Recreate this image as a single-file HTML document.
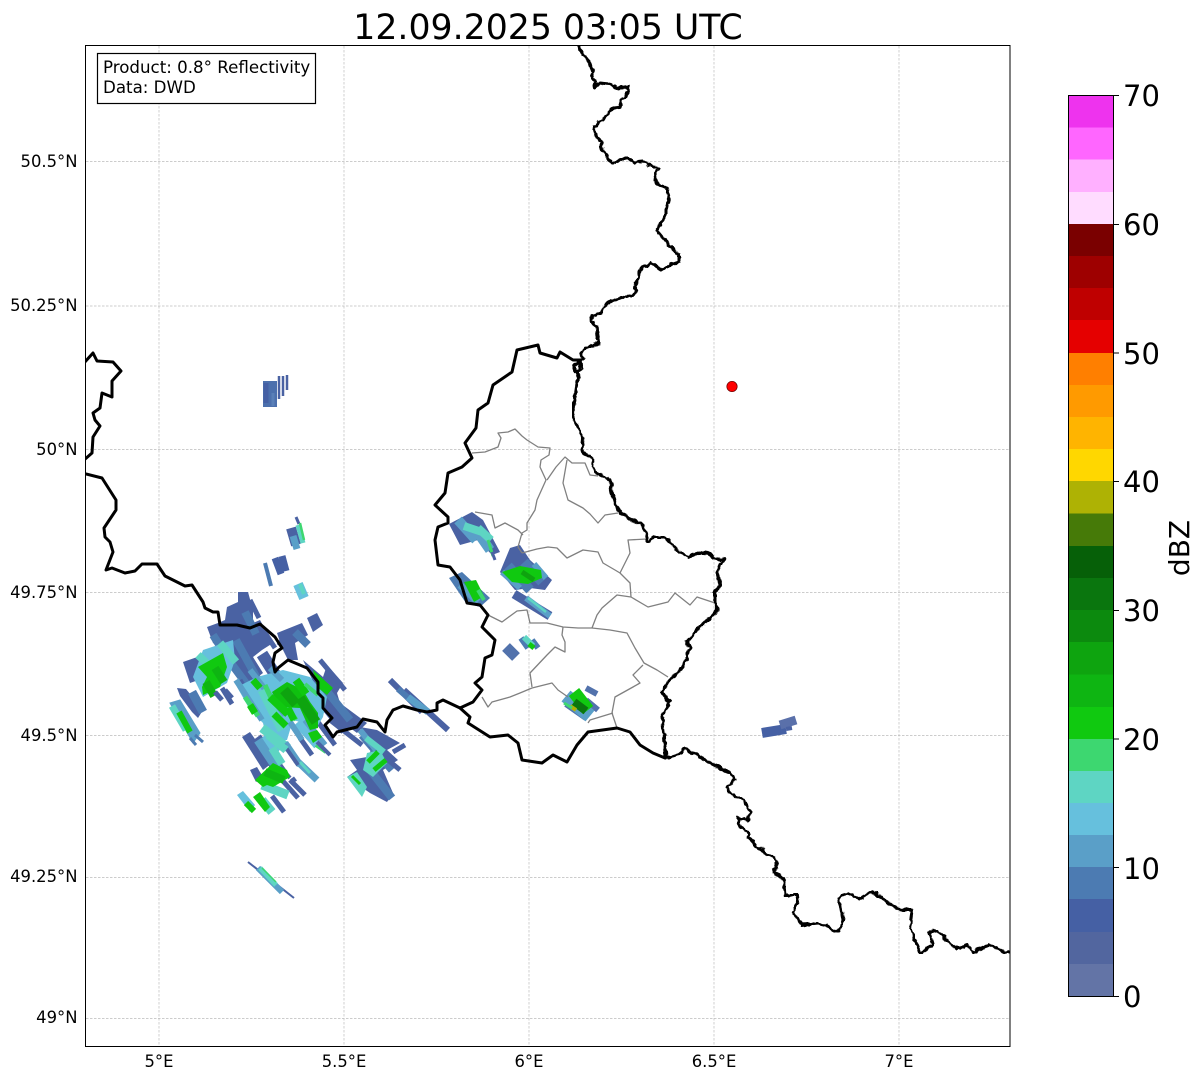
<!DOCTYPE html>
<html><head><meta charset="utf-8"><title>Radar</title>
<style>
html,body{margin:0;padding:0;background:#fff}
svg{display:block}
text{font-family:"DejaVu Sans","Liberation Sans",sans-serif;fill:#000}
</style></head><body>
<svg width="1202" height="1081" viewBox="0 0 1202 1081" xmlns="http://www.w3.org/2000/svg">
<defs>
<clipPath id="ax"><rect x="86" y="46" width="924" height="1000"/></clipPath>
<filter id="wig" x="0" y="0" width="1" height="1" filterUnits="objectBoundingBox" color-interpolation-filters="sRGB">
<feTurbulence type="fractalNoise" baseFrequency="0.16" numOctaves="2" seed="4"/>
<feDisplacementMap in="SourceGraphic" scale="5" xChannelSelector="R" yChannelSelector="G"/>
</filter>
</defs>
<rect width="1202" height="1081" fill="#fff"/>
<text x="548" y="39" font-size="34.7" text-anchor="middle">12.09.2025 03:05 UTC</text>

<g clip-path="url(#ax)">
<!-- grid -->
<path d="M159 46V1046M344 46V1046M529 46V1046M714 46V1046M899 46V1046M86 161.500H1010M86 306H1010M86 449.500H1010M86 592.500H1010M86 735.500H1010M86 877.500H1010M86 1018.500H1010" fill="none" stroke="#bcbcbc" stroke-width=".7" stroke-dasharray="2.500 1.500"/>

<!-- radar -->
<g fill="none">
<!-- north block -->
<path stroke="#4c70ad" stroke-width="14" d="M270 381V407"/>
<path stroke="#4a62a3" stroke-width="2.500" d="M279 376V399M283 376V396M287 375V390"/>
<path stroke="#4560a4" stroke-width="5" d="M266 383V403"/>
<path stroke="#5a80b8" stroke-width="3" d="M273 393V406"/>
<!-- small ones -->
<path stroke="#4a62a3" stroke-width="3" d="M296 517L299 524"/>
<path stroke="#4a62a3" stroke-width="10" d="M291 528L296 545"/>
<path stroke="#5a9fc8" stroke-width="7" d="M293 536L297 549"/>
<path stroke="#5ed5c3" stroke-width="5" d="M298 525L303 543"/>
<path stroke="#3dd770" stroke-width="2.500" d="M300 523L304 540"/>
<path stroke="#4560a4" stroke-width="7" d="M275 558L281 574M282 556L286 571"/>
<path stroke="#4c7bb2" stroke-width="4" d="M265 563L271 586"/>
<path stroke="#66c0dd" stroke-width="10" d="M298 584L304 598"/>
<path stroke="#5ed5c3" stroke-width="4" d="M300 584L304 594"/>
<!-- main polygons -->
<g fill="#4a62a3">
<path d="M238 592L248 592L253 610L253 623L260 620L273 643L262 650L253 657L263 673L250 683L237 673L233 657L213 643L207 627L218 623L225 620L227 607L238 602Z"/>
<path d="M277 633L302 623L308 635L295 643L298 660L288 660L282 648Z"/>
<path d="M307 618L317 613L323 625L313 632Z"/>
<path d="M303 660L323 677L327 665L343 683L337 693L340 703L367 723L357 733L330 713L317 690Z"/>
<path d="M360 727L377 730L400 743L387 750L398 760L383 770L393 793L387 802L370 793L347 777L357 770L350 760L367 757L373 747Z"/>
<path d="M183 662L203 655L207 677L190 683Z"/>
<path d="M242 737L250 732L272 763L263 770Z"/>
<path d="M250 770L257 767L263 777L256 782Z"/>
<path d="M177 688L186 689L203 710L198 718L192 712L180 696Z"/>
</g>
<path stroke="#4a62a3" stroke-width="12" d="M256 738L282 774M322 700L346 730M236 660L258 695M262 654L276 676"/>
<path stroke="#4c7bb2" stroke-width="8" d="M213 635L232 665M236 640L258 680M225 655L262 705M295 632L308 645M322 685L350 720M245 612L256 634M362 735L392 770M370 770L392 798"/>
<path stroke="#4a62a3" stroke-width="5" d="M250 600L259 618M262 628L275 648M320 660L345 690M240 680L252 700M278 642L290 650M393 752L405 745M330 720L362 745M290 780L305 795M370 745L400 770M318 722L335 745M300 738L312 755M195 675L205 690M222 688L232 704"/>
<!-- streak east of cluster -->
<path stroke="#4a62a3" stroke-width="6" d="M390 680L422 712M404 690L448 730"/>
<path stroke="#4c7bb2" stroke-width="6" d="M398 689L420 708"/>
<path stroke="#5a9fc8" stroke-width="7" d="M408 697L428 712"/>
<!-- far left -->
<path stroke="#4c7bb2" stroke-width="9" d="M192 692L203 712"/>
<path stroke="#5a9fc8" d="M170 703L180 700L200 733L193 743Z" fill="#5a9fc8" stroke-width="1"/>
<path stroke="#5ed5c3" stroke-width="7" d="M172 706L186 730"/>
<path stroke="#10c910" stroke-width="6" d="M179 712L190 732"/>
<path stroke="#4c7bb2" stroke-width="3" d="M195 735L203 742M190 738L196 745"/>
<!-- left sub cluster -->
<path d="M203 650L233 640L235 660L227 683L203 697L193 677Z" fill="#66c0dd"/>
<path stroke="#5ed5c3" stroke-width="8" d="M198 655L214 670M220 643L236 662"/>
<path d="M198 667L223 653L227 667L220 687L203 695L202 687L207 677Z" fill="#10c910"/>
<path stroke="#0eb512" stroke-width="8" d="M206 682L214 696M215 668L224 682"/>
<path stroke="#4a62a3" stroke-width="5" d="M215 692L222 700M225 690L232 698"/>
<!-- main teal -->
<path d="M237 687L257 677L283 670L310 677L327 697L323 717L317 727L293 720L287 740L267 740L263 723L250 710Z" fill="#66c0dd"/>
<path stroke="#66c0dd" stroke-width="10" d="M298 722L318 745M262 738L278 752"/>
<path stroke="#5a9fc8" stroke-width="6" d="M236 680L262 720M250 670L285 715M270 668L282 680M290 722L302 740M305 720L325 745"/>
<path stroke="#5ed5c3" stroke-width="9" d="M262 690L282 730M262 728L288 748M278 688L292 708"/>
<path stroke="#3dd770" stroke-width="5" d="M245 697L258 716M284 702L296 720M265 685L272 700"/>
<!-- greens main -->
<path d="M272 692L287 682L303 690L310 702L318 713L318 728L310 730L300 708L280 707Z" fill="#0fc00f"/>
<path stroke="#10c910" stroke-width="8" d="M270 697L288 714M296 680L306 694"/>
<path stroke="#0ea40f" stroke-width="10" d="M300 698L316 722M284 690L296 704"/>
<path d="M313 670L333 688L327 695L317 687Z" fill="#10c910"/>
<path d="M308 733L317 730L322 737L313 743Z" fill="#10c910"/>
<path stroke="#10c910" stroke-width="7" d="M253 680L260 688M250 705L255 713M274 714L286 726M288 708L294 720"/>
<path stroke="#3dd770" stroke-width="4" d="M316 745L326 752M305 684L318 695"/>
<!-- below cluster -->
<path stroke="#5a9fc8" stroke-width="7" d="M285 743L300 765M296 760L317 780"/>
<path stroke="#5ed5c3" stroke-width="3" d="M300 762L310 773"/>
<path stroke="#4a62a3" stroke-width="4" d="M317 742L330 755M284 745L298 765M283 770L290 778"/>
<path stroke="#5a9fc8" stroke-width="9" d="M258 740L278 770"/>
<path stroke="#5ed5c3" stroke-width="8" d="M268 735L286 750M272 748L282 764"/>
<path stroke="#4a62a3" stroke-width="5" d="M282 780L298 798M272 796L284 812M292 778L295 782"/>
<path stroke="#5ed5c3" stroke-width="9" d="M262 785L288 795M262 800L272 812"/>
<path d="M255 780L273 763L287 770L290 777L273 787L267 785L263 787Z" fill="#10c910"/>
<path stroke="#0eb512" stroke-width="8" d="M265 772L284 780"/>
<path d="M253 797L260 792L270 807L265 812Z" fill="#10c910"/>
<path d="M237 795L243 791L255 805L250 812Z" fill="#66c0dd"/>
<path stroke="#10c910" stroke-width="6" d="M246 803L254 811"/>
<!-- lower right greens -->
<path d="M367 753L380 750L387 763L373 777L363 770Z" fill="#5ed5c3"/>
<path d="M347 777L357 772L367 787L362 797Z" fill="#5ed5c3"/>
<path stroke="#5a9fc8" stroke-width="6" d="M360 730L376 750"/>
<path stroke="#5ed5c3" stroke-width="6" d="M366 738L384 752"/>
<path stroke="#10c910" stroke-width="5" d="M368 762L378 752M374 770L386 760"/>
<path stroke="#10c910" stroke-width="3" d="M352 776L360 784"/>
<!-- bottom streak -->
<path stroke="#4a62a3" stroke-width="2" d="M248 862L294 898"/>
<path stroke="#5a9fc8" stroke-width="6" d="M258 868L282 892"/>
<path stroke="#5ed5c3" stroke-width="5" d="M260 868L276 885"/>
<path stroke="#3dd770" stroke-width="1.500" d="M262 868L276 882"/>
<!-- Lux A -->
<path d="M449 524L472 512L483 520L500 552L492 555L478 540L460 545Z" fill="#4a62a3"/>
<path stroke="#5a9fc8" stroke-width="10" d="M458 520L476 540M476 530L490 550"/>
<path stroke="#5ed5c3" stroke-width="8" d="M464 526L482 532M478 528L491 540"/>
<path stroke="#3dd770" stroke-width="3" d="M488 540L493 556"/>
<path stroke="#4a62a3" stroke-width="3" d="M492 552L495 560"/>
<!-- Lux B -->
<path d="M510 548L520 545L530 560L552 580L545 590L530 588L515 590L500 572L505 560Z" fill="#4a62a3"/>
<path stroke="#4c7bb2" stroke-width="10" d="M508 566L530 590M524 562L542 582"/>
<path stroke="#5a9fc8" stroke-width="6" d="M502 572L520 588M534 564L546 578"/>
<path d="M502 572L520 566L541 570L542 578L528 584L512 582Z" fill="#10c910"/>
<path stroke="#0ea40f" stroke-width="5" d="M522 572L534 580"/>
<path stroke="#4a62a3" stroke-width="9" d="M514 594L550 616"/>
<path stroke="#5a9fc8" stroke-width="6" d="M526 598L550 616"/>
<path stroke="#5ed5c3" stroke-width="2.500" d="M528 598L546 612"/>
<!-- Lux C -->
<path d="M449 578L462 572L490 598L480 607L466 603Z" fill="#4c7bb2"/>
<path stroke="#5a9fc8" stroke-width="7" d="M460 585L478 602"/>
<path d="M464 582L476 580L484 596L474 602Z" fill="#10c910"/>
<path stroke="#3dd770" stroke-width="4" d="M478 590L484 600"/>
<!-- Lux D -->
<path stroke="#5272ac" stroke-width="11" d="M506 647L516 657"/>
<path stroke="#4c7bb2" stroke-width="6" d="M521 638L528 648M532 640L538 648"/>
<path stroke="#5ed5c3" stroke-width="6" d="M524 637L533 646"/>
<path stroke="#10c910" stroke-width="5" d="M529 644L534 648"/>
<!-- Lux E -->
<path stroke="#5272ac" stroke-width="6" d="M586 688L597 694M566 704L586 718M586 700L598 710"/>
<path stroke="#5a9fc8" stroke-width="14" d="M566 696L590 716"/>
<path stroke="#10c910" stroke-width="13" d="M574 692L588 710"/>
<path stroke="#0a760e" stroke-width="8" d="M574 702L586 711"/>
<path stroke="#aeb204" stroke-width="4" d="M570 706L576 710"/>
<path stroke="#3dd770" stroke-width="3" d="M564 703L572 708"/>
<!-- east -->
<path stroke="#4560a4" stroke-width="10" d="M762 733L786 729"/>
<path stroke="#5a70aa" stroke-width="9" d="M780 725L796 720"/>
<path stroke="#4a62a3" stroke-width="4" d="M786 729L792 728"/>
</g>

<!-- gray admin borders -->
<g fill="none" stroke="#808080" stroke-width="1.300" stroke-linejoin="round">
<path d="M472 453L485 452L498 447L501 438L498 433L508 432L515 429L522 436L527 440L538 447L550 448L549 455L541 460L540 467L546 480L537 500L535 510L527 523L527 530L522 533L518 547L522 553"/>
<path d="M547 480L556 467L565 457L572 463L585 463L590 475L598 476"/>
<path d="M567 460L563 483L568 500L583 508L590 514L598 523L605 515L618 513"/>
<path d="M475 512L492 515L495 528L505 523L518 530L523 535"/>
<path d="M522 553L537 549L548 547L557 548L567 558L583 550L598 552L603 563L615 570L620 573L630 583L631 597"/>
<path d="M620 573L630 553L628 540L647 539"/>
<path d="M631 597L617 595L602 608L597 615L592 628"/>
<path d="M631 597L648 607L668 602L675 593L690 605L697 597L715 603"/>
<path d="M488 615L502 622L517 611L527 610L530 623L547 623L563 627L578 628L592 628L610 630L627 633L635 648L644 663L657 670L668 677"/>
<path d="M563 627L562 635L565 642L565 652L555 647L547 655L530 673L532 687"/>
<path d="M482 697L488 707L492 702L510 697L520 693L532 688L552 683L558 690L568 697"/>
<path d="M643 665L633 675L640 683L633 687L615 697L612 713L617 728"/>
<path d="M613 713L590 720L588 723"/>
</g>

<!-- black borders -->
<g fill="none" stroke="#000" stroke-width="3" stroke-linejoin="round" stroke-linecap="round">
<g filter="url(#wig)">
<path d="M578 45L583 55L590 63L593 72L591 77L596 82L594 88L600 83L610 84L617 88L627 87L629 90L622 100L620 107L612 109L605 117L594 127L596 137L603 142L599 147L605 152L612 164L622 159L629 159L635 162L643 161L653 167L659 168L655 173L656 183L667 188L669 197L666 210L666 215L657 231L667 243L679 255L679 262L670 265L662 270L651 263L642 267L635 287L637 290L632 297L625 296L607 303L602 313L593 315L591 322L597 327L599 343L585 348L581 355L583 359L580 360L583 368L580 372L574 371L574 366L578 362L580 364L578 377L575 397L572 415L578 428L583 438L582 450L592 460L595 472L610 480L612 493L618 510L628 518L643 525L648 542L655 537L665 537L677 550L688 557L703 552L720 560L725 558L717 572L720 585L715 593L715 603L718 610L700 627L687 642L690 648L683 667L668 682L662 693L670 702L662 717L666 757"/>
<path d="M665 758L677 755L686 748L700 757L710 763L730 773L735 780L727 787L732 795L745 800L747 808L752 812L747 820L738 817L738 823L748 832L748 837L757 847L777 860L774 873L783 877L785 895L797 895L798 902L793 912L802 925L818 923L838 932L843 920L839 898L847 893L860 899L870 892L876 893L888 903L902 910L912 910L910 927L917 945L920 954L933 945L929 932L937 931L947 940L957 949L968 945L973 952L990 945L1005 952L1012 952"/>
</g>
<path d="M580 360L573 360L560 352L557 358L540 353L538 345L517 350L512 372L493 385L488 403L478 410L476 428L465 443L472 458L462 467L448 473L445 493L435 505L448 517L448 523L438 527L435 540L438 565L450 567L460 580L467 603L480 605L488 615L482 627L495 640L492 655L485 658L482 677L475 683L482 690L473 702L460 708L443 700L437 703L437 710L427 712L417 710L403 706L393 710L387 720L385 732L377 722L363 719L357 727L337 732L333 737L325 725L332 718L323 708L323 698L318 693L318 682L307 668L288 660L278 668L275 672L273 662L275 653L282 648L275 637L260 624L250 628L237 625L220 625L218 612L213 612L205 608L203 602L192 585L185 586L165 576L157 564L142 564L135 571L125 573L112 568L106 570L113 552L110 542L105 537L104 528L116 510L116 500L102 478L86 474"/>
<path d="M460 708L470 717L468 723L490 737L508 735L518 743L522 760L542 763L553 755L567 762L577 745L588 732L617 728L630 732L640 745L653 753L665 758"/>
<path d="M84 363L93 353L97 361L113 362L121 371L112 381L112 397L102 393L100 408L93 413L95 420L100 426L93 437L92 453L84 460"/>
</g>

<circle cx="732" cy="386.500" r="5.200" fill="#f00" stroke="#600" stroke-width=".7"/>
</g>

<!-- axes frame -->
<rect x="85.500" y="45.500" width="924.500" height="1001" fill="none" stroke="#000" stroke-width="1"/>

<!-- info box -->
<rect x="97.500" y="53.500" width="218" height="50" fill="#fff" stroke="#000" stroke-width="1.200"/>
<text x="103" y="73" font-size="16.670">Product: 0.8° Reflectivity</text>
<text x="103" y="93" font-size="16.670">Data: DWD</text>

<!-- y labels -->
<g font-size="16.400" text-anchor="end">
<text x="77.500" y="167">50.5°N</text>
<text x="77.500" y="311">50.25°N</text>
<text x="77.500" y="455">50°N</text>
<text x="77.500" y="598">49.75°N</text>
<text x="77.500" y="741">49.5°N</text>
<text x="77.500" y="882">49.25°N</text>
<text x="77.500" y="1023">49°N</text>
</g>
<!-- x labels -->
<g font-size="16.400" text-anchor="middle">
<text x="159" y="1067">5°E</text>
<text x="344" y="1067">5.5°E</text>
<text x="529" y="1067">6°E</text>
<text x="714" y="1067">6.5°E</text>
<text x="899" y="1067">7°E</text>
</g>

<!-- colorbar -->
<g>
<rect x="1068" y="95.500" width="46" height="32.500" fill="#ee33ee"/>
<rect x="1068" y="127.500" width="46" height="32.500" fill="#ff66ff"/>
<rect x="1068" y="159.500" width="46" height="33" fill="#ffb0ff"/>
<rect x="1068" y="192" width="46" height="32.500" fill="#ffdcff"/>
<rect x="1068" y="224" width="46" height="32.500" fill="#7a0000"/>
<rect x="1068" y="256" width="46" height="32.500" fill="#9e0000"/>
<rect x="1068" y="288" width="46" height="32.500" fill="#bf0000"/>
<rect x="1068" y="320" width="46" height="33" fill="#e50000"/>
<rect x="1068" y="353" width="46" height="32.500" fill="#ff7f00"/>
<rect x="1068" y="385" width="46" height="32.500" fill="#ff9a00"/>
<rect x="1068" y="417" width="46" height="32.500" fill="#ffb400"/>
<rect x="1068" y="449" width="46" height="32.500" fill="#ffd700"/>
<rect x="1068" y="481" width="46" height="33" fill="#aeb204"/>
<rect x="1068" y="513.500" width="46" height="33" fill="#467a08"/>
<rect x="1068" y="546" width="46" height="32.500" fill="#066008"/>
<rect x="1068" y="578" width="46" height="32.500" fill="#0a760e"/>
<rect x="1068" y="610" width="46" height="32.500" fill="#0c8a0e"/>
<rect x="1068" y="642" width="46" height="33" fill="#0ea40f"/>
<rect x="1068" y="674.500" width="46" height="33" fill="#0eb512"/>
<rect x="1068" y="707" width="46" height="32.500" fill="#10c910"/>
<rect x="1068" y="739" width="46" height="32" fill="#3dd770"/>
<rect x="1068" y="771" width="46" height="32.500" fill="#5ed5c3"/>
<rect x="1068" y="803" width="46" height="32.500" fill="#66c0dd"/>
<rect x="1068" y="835" width="46" height="32.500" fill="#5a9fc8"/>
<rect x="1068" y="867" width="46" height="32.500" fill="#4c7bb2"/>
<rect x="1068" y="899" width="46" height="33" fill="#4560a4"/>
<rect x="1068" y="932" width="46" height="32.500" fill="#52669f"/>
<rect x="1068" y="964" width="46" height="32.500" fill="#6374a6"/>
<rect x="1068.500" y="95.500" width="45" height="901" fill="none" stroke="#000" stroke-width="1"/>
<path d="M1113 95.500H1119M1113 224.500H1119M1113 353H1119M1113 481.500H1119M1113 610.500H1119M1113 739H1119M1113 867.500H1119M1113 996.500H1119" stroke="#000" stroke-width="1"/>
<g font-size="29">
<text x="1123" y="106">70</text>
<text x="1123" y="235">60</text>
<text x="1123" y="364">50</text>
<text x="1123" y="492">40</text>
<text x="1123" y="621">30</text>
<text x="1123" y="750">20</text>
<text x="1123" y="879">10</text>
<text x="1123" y="1007">0</text>
</g>
<text transform="translate(1189 548) rotate(-90)" font-size="28" text-anchor="middle">dBZ</text>
</g>
</svg>
</body></html>
